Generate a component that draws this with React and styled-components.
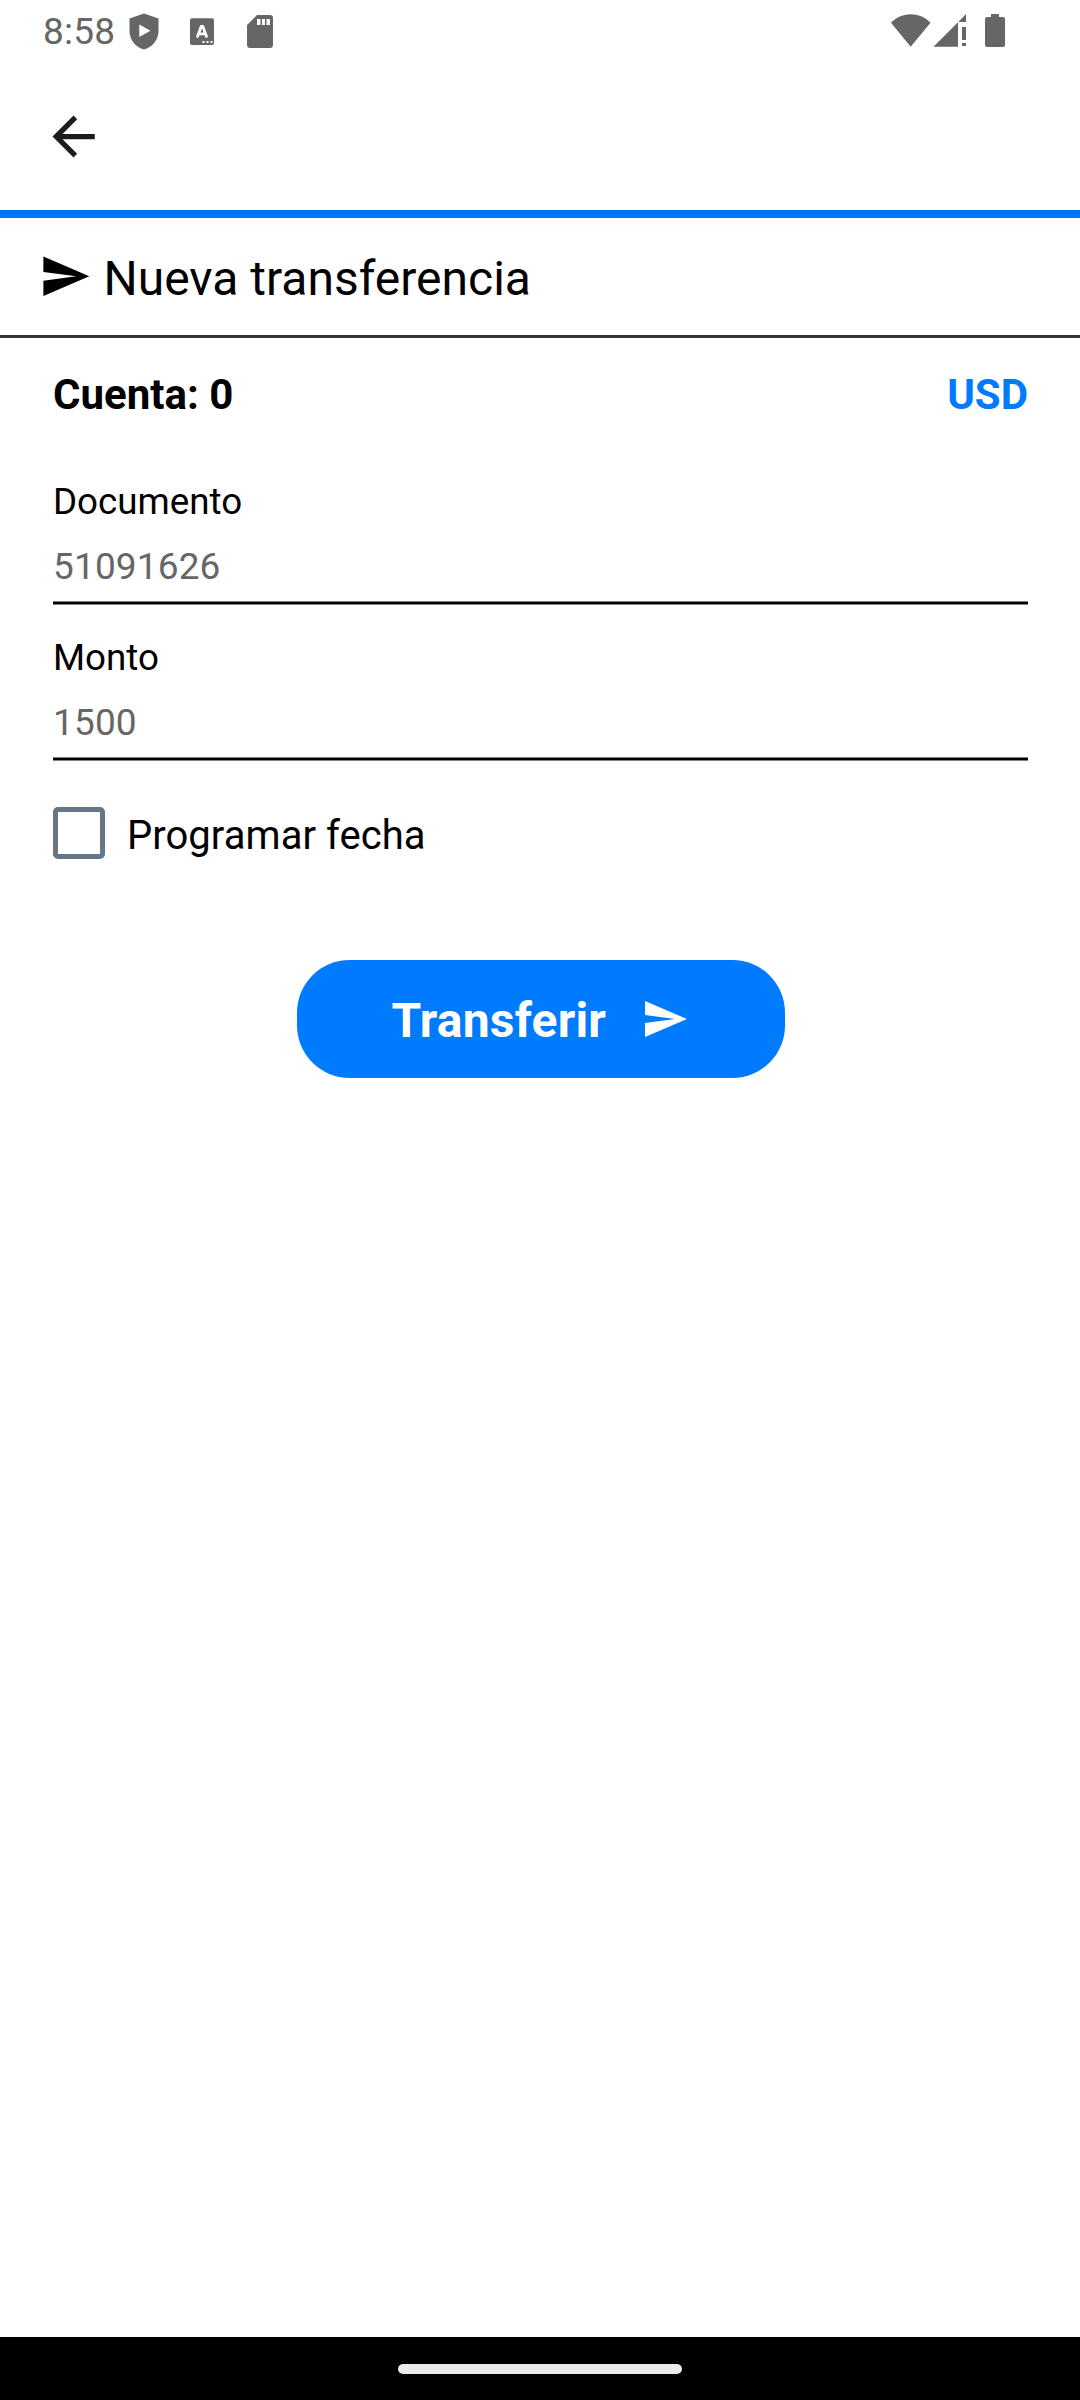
import React from "react";
import styled, { createGlobalStyle } from "styled-components";

const GlobalStyle = createGlobalStyle`
  *, *::before, *::after { box-sizing: border-box; }
  body { margin: 0; background: #fff; font-family: Roboto, "Liberation Sans", sans-serif; color: #000; }
`;

const Screen = styled.div`
  width: 1080px;
  height: 2400px;
  display: flex;
  flex-direction: column;
  background: #fff;
  overflow: hidden;
`;

const StatusBar = styled.div`
  height: 63px;
  display: flex;
  justify-content: space-between;
  padding: 0 75px 0 43px;
  color: #666;
  background: #fff;
`;

const StatusGroup = styled.div`
  display: flex;
  align-items: flex-start;
`;

const Clock = styled.time`
  width: 86px;
  font-size: 37px;
  line-height: 42px;
  padding-top: 11px;
  letter-spacing: 0.2px;
  white-space: nowrap;
`;

const StatusIcon = styled.svg`
  display: block;
  flex: none;
  height: 63px;
  margin-left: ${(p) => p.$gap || 0}px;
  fill: currentColor;
`;

const AppBar = styled.header`
  height: 147px;
  padding: 42px 42px 0;
  background: #fff;
`;

const BackButton = styled.button`
  display: block;
  width: 63px;
  height: 63px;
  padding: 0;
  border: 0;
  background: none;
  color: #1c1c1e;
`;

const Icon = styled.svg`
  display: block;
  flex: none;
  width: ${(p) => p.$size}px;
  height: ${(p) => p.$size}px;
  fill: currentColor;
`;

const Accent = styled.div`
  height: 8px;
  background: linear-gradient(#006fe8, #007aff);
`;

const TitleRow = styled.div`
  height: 120px;
  display: flex;
  align-items: flex-start;
  padding: 32px 39px 0;
  border-bottom: 3px solid #333;
  background: linear-gradient(#fafafa, #fff 10px);
`;

const Title = styled.h1`
  margin: 0 0 0 12px;
  padding-top: 1px;
  font-size: 48px;
  font-weight: 400;
  line-height: 56px;
`;

const Form = styled.main`
  flex: 1;
  display: flex;
  flex-direction: column;
  padding: 0 52px 0 53px;
`;

const AccountRow = styled.div`
  display: flex;
  justify-content: space-between;
  padding-top: 32px;
  height: 137px;
  font-size: 42px;
  font-weight: 700;
  line-height: 50px;
`;

const Currency = styled.span`
  color: #007aff;
`;

const Field = styled.label`
  display: block;
  height: 156px;
  font-size: 36.75px;
  line-height: 44px;
`;

const FieldLabel = styled.span`
  display: block;
  padding-top: 5px;
`;

const FieldInput = styled.input`
  display: block;
  width: 100%;
  height: 44px;
  margin-top: 21px;
  padding: 0;
  border: 0;
  outline: 0;
  background: none;
  font: inherit;
  font-size: 37px;
  letter-spacing: 0.15px;
  color: #000;
  &::placeholder { color: #666; opacity: 1; }
`;

const Underline = styled.div`
  height: 4px;
  margin-top: 12px;
  background: #000;
  border: solid #808080;
  border-width: 1px 0;
`;

const CheckRow = styled.label`
  display: flex;
  align-items: flex-start;
  margin-top: 20px;
  font-size: 40px;
  line-height: 46px;
`;

const CheckBox = styled.input`
  appearance: none;
  width: 52px;
  height: 52px;
  margin: 0 22px 0 0;
  border: 5px solid #657786;
  border-radius: 5px;
`;

const CheckText = styled.span`
  padding-top: 6px;
  letter-spacing: 0.05px;
`;

const SubmitButton = styled.button`
  align-self: center;
  width: 488px;
  height: 118px;
  margin-top: 101px;
  display: flex;
  align-items: center;
  padding: 0 0 0 95px;
  border: 0;
  border-radius: 52.5px;
  background: #007aff;
  color: #fff;
  font: 700 48px/56px Roboto, "Liberation Sans", sans-serif;
`;

const SubmitText = styled.span`
  width: 249px;
  padding-top: 3px;
  text-align: left;
  letter-spacing: 0.2px;
`;

const NavBar = styled.footer`
  height: 63px;
  display: flex;
  justify-content: center;
  padding-top: 27px;
  background: #000;
`;

const NavPill = styled.div`
  width: 284px;
  height: 10px;
  border-radius: 5px;
  background: #ebebeb;
`;

const SendIcon = ({ size }) => (
  <Icon $size={size} viewBox="0 0 24 24" aria-hidden="true">
    <path d="M2.01 21L23 12 2.01 3 2 10l15 2-15 2z" />
  </Icon>
);

const FormField = ({ label, placeholder }) => (
  <Field>
    <FieldLabel>{label}</FieldLabel>
    <FieldInput placeholder={placeholder} />
    <Underline />
  </Field>
);

export default function App() {
  return (
    <>
      <GlobalStyle />
      <Screen>
        <StatusBar>
          <StatusGroup>
            <Clock>8:58</Clock>
            <StatusIcon width="30" viewBox="0 0 30 63">
              <path fillRule="evenodd" d="M15 13.5L29.5 18.5V31C29.5 40 23 47.5 15 49.5C7 47.5.5 40 .5 31V18.5ZM10.3 24.5V37L21.5 30.7Z" />
            </StatusIcon>
            <StatusIcon width="24" $gap={31} viewBox="0 0 24 63">
              <rect y="18.3" width="24" height="26.7" rx="2" />
              <path d="M7.5 36.5L11.2 26.5H12.8L16.5 36.5M9 33.8H15" fill="none" stroke="#fff" strokeWidth="2.8" strokeLinecap="round" strokeLinejoin="round" />
              <path d="M12.5 41h2v2h-2zM16.5 41h2v2h-2zM20.5 41h2v2h-2z" fill="#fff" />
            </StatusIcon>
            <StatusIcon width="26" $gap={33} viewBox="0 0 26 63">
              <path fillRule="evenodd" d="M10 15H23Q26 15 26 18V45Q26 48 23 48H3Q0 48 0 45V25ZM10 19V25H13.5V19ZM15 19V25H18V19ZM19.5 19V25H23V19Z" />
            </StatusIcon>
          </StatusGroup>
          <StatusGroup>
            <StatusIcon width="40" viewBox="0 0 40 63">
              <path d="M0 22.8C11 11.5 28.5 11.5 39.5 22.8L19.7 46.7Z" />
            </StatusIcon>
            <StatusIcon width="33" $gap={2} viewBox="0 0 33 63">
              <path d="M0.5 46.7L25 22.2V46.7ZM25.3 22L33 14V22ZM29 27H33V40H29ZM29 43H33V46H29Z" />
            </StatusIcon>
            <StatusIcon width="20" $gap={19} viewBox="0 0 20 63">
              <path d="M6 14H14V17H18Q20 17 20 19V45Q20 47 18 47H2Q0 47 0 45V19Q0 17 2 17H6Z" />
            </StatusIcon>
          </StatusGroup>
        </StatusBar>
        <AppBar>
          <BackButton aria-label="Volver">
            <Icon $size={63} viewBox="0 0 24 24">
              <path d="M20.1 11H7.83l5.59-5.59L12 4l-8 8 8 8 1.41-1.41L7.83 13H20.1z" />
            </Icon>
          </BackButton>
        </AppBar>
        <Accent />
        <TitleRow>
          <SendIcon size={52.5} />
          <Title>Nueva transferencia</Title>
        </TitleRow>
        <Form>
          <AccountRow>
            <span>Cuenta: 0</span>
            <Currency>USD</Currency>
          </AccountRow>
          <FormField label="Documento" placeholder="51091626" />
          <FormField label="Monto" placeholder="1500" />
          <CheckRow>
            <CheckBox type="checkbox" />
            <CheckText>Programar fecha</CheckText>
          </CheckRow>
          <SubmitButton type="button">
            <SubmitText>Transferir</SubmitText>
            <SendIcon size={48} />
          </SubmitButton>
        </Form>
        <NavBar>
          <NavPill />
        </NavBar>
      </Screen>
    </>
  );
}
